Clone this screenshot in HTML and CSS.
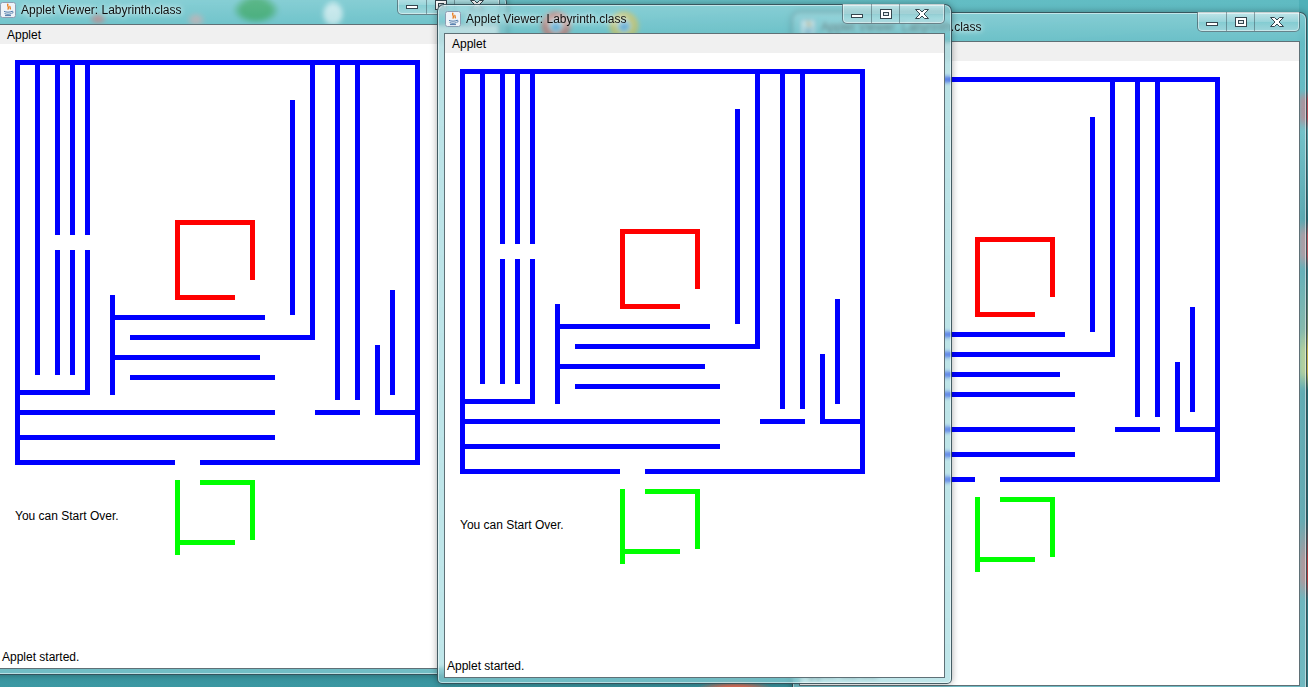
FILE: index.html
```html
<!DOCTYPE html>
<html>
<head>
<meta charset="utf-8">
<title>Applet Viewer: Labyrinth.class</title>
<link rel="stylesheet" href="styles.css">
</head>
<body>
<svg class="defs" aria-hidden="true">
  <defs>
    <g id="maze">
      <g class="walls">
        <rect x="15" y="60" width="405" height="5"/>
        <rect x="15" y="60" width="5" height="405"/>
        <rect x="415" y="60" width="5" height="405"/>
        <rect x="15" y="460" width="160" height="5"/>
        <rect x="200" y="460" width="220" height="5"/>
        <rect x="35" y="60" width="5" height="315"/>
        <rect x="55" y="60" width="5" height="175"/>
        <rect x="55" y="250" width="5" height="125"/>
        <rect x="70" y="60" width="5" height="175"/>
        <rect x="70" y="250" width="5" height="125"/>
        <rect x="85" y="60" width="5" height="175"/>
        <rect x="85" y="250" width="5" height="145"/>
        <rect x="15" y="390" width="75" height="5"/>
        <rect x="110" y="295" width="5" height="100"/>
        <rect x="110" y="315" width="155" height="5"/>
        <rect x="130" y="335" width="185" height="5"/>
        <rect x="310" y="60" width="5" height="280"/>
        <rect x="110" y="355" width="150" height="5"/>
        <rect x="130" y="375" width="145" height="5"/>
        <rect x="290" y="100" width="5" height="215"/>
        <rect x="335" y="60" width="5" height="340"/>
        <rect x="355" y="60" width="5" height="340"/>
        <rect x="390" y="290" width="5" height="105"/>
        <rect x="375" y="345" width="5" height="70"/>
        <rect x="375" y="410" width="45" height="5"/>
        <rect x="315" y="410" width="45" height="5"/>
        <rect x="15" y="410" width="260" height="5"/>
        <rect x="15" y="435" width="260" height="5"/>
      </g>
      <g class="red">
        <rect x="175" y="220" width="5" height="80"/>
        <rect x="175" y="220" width="80" height="5"/>
        <rect x="250" y="220" width="5" height="60"/>
        <rect x="175" y="295" width="60" height="5"/>
      </g>
      <g class="green">
        <rect x="175" y="480" width="5" height="75"/>
        <rect x="200" y="480" width="55" height="5"/>
        <rect x="250" y="480" width="5" height="60"/>
        <rect x="175" y="540" width="60" height="5"/>
      </g>
    </g>
    <g id="javaicon">
      <rect x="0.5" y="0.5" width="15" height="15" rx="2" fill="#eef3f8" stroke="#8c9db2"/>
      <path d="M8.2 1.8c-2.2 2 1.8 3 -0.4 5.8M10.2 4c-1.2 1.1 0.9 1.8 -0.2 3.4" fill="none" stroke="#e76f00" stroke-width="1.2"/>
      <path d="M4 9.4c2.2 1 5.8 1 8 0M4.6 11.6c2 .9 5 .9 6.8 0M12 9.4c1.6-.4 1.6 1.8-.3 1.7M5 13.6h6" fill="none" stroke="#4a78a8" stroke-width="1"/>
    </g>
    <g id="gmin">
      <rect x="2.5" y="6.5" width="11" height="3" fill="#fff" stroke="#35454e"/>
    </g>
    <g id="gmax">
      <rect x="2.5" y="1.5" width="11" height="9" fill="#fff" stroke="#35454e"/>
      <rect x="5.5" y="4.5" width="5" height="3" fill="#dfe7ea" stroke="#35454e"/>
    </g>
    <g id="gclose">
      <polygon points="1.5,1.5 5.5,1.5 8,4 10.5,1.5 14.5,1.5 10,6 14.5,10.5 10.5,10.5 8,8 5.5,10.5 1.5,10.5 6,6" fill="#fff" stroke="#35454e" stroke-linejoin="round"/>
    </g>
  </defs>
</svg>

<div class="desktop">

  <div class="win win-right">
    <div class="titlebar">
      <svg class="jicon" viewBox="0 0 16 16"><use href="#javaicon"/></svg>
      <span class="title">Applet Viewer: Labyrinth.class</span>
      <div class="caption">
        <span class="cbtn cmin"><svg viewBox="0 0 16 12"><use href="#gmin"/></svg></span>
        <span class="cbtn cmax"><svg viewBox="0 0 16 12"><use href="#gmax"/></svg></span>
        <span class="cbtn cclose"><svg viewBox="0 0 16 12"><use href="#gclose"/></svg></span>
      </div>
    </div>
    <div class="client">
      <div class="menubar"><span class="menu">Applet</span></div>
      <div class="applet">
        <svg class="canvas" viewBox="0 44 500 602"><use href="#maze"/><text class="msg" x="15" y="520">You can Start Over.</text></svg>
      </div>
      <div class="status">Applet started.</div>
    </div>
  </div>

  <div class="win win-left">
    <div class="titlebar">
      <svg class="jicon" viewBox="0 0 16 16"><use href="#javaicon"/></svg>
      <span class="title">Applet Viewer: Labyrinth.class</span>
      <div class="caption">
        <span class="cbtn cmin"><svg viewBox="0 0 16 12"><use href="#gmin"/></svg></span>
        <span class="cbtn cmax"><svg viewBox="0 0 16 12"><use href="#gmax"/></svg></span>
        <span class="cbtn cclose"><svg viewBox="0 0 16 12"><use href="#gclose"/></svg></span>
      </div>
    </div>
    <div class="client">
      <div class="menubar"><span class="menu">Applet</span></div>
      <div class="applet">
        <svg class="canvas" viewBox="0 44 500 602"><use href="#maze"/><text class="msg" x="15" y="520">You can Start Over.</text></svg>
      </div>
      <div class="status">Applet started.</div>
    </div>
  </div>

  <div class="win win-mid">
    <div class="titlebar">
      <svg class="jicon" viewBox="0 0 16 16"><use href="#javaicon"/></svg>
      <span class="title">Applet Viewer: Labyrinth.class</span>
      <div class="caption">
        <span class="cbtn cmin"><svg viewBox="0 0 16 12"><use href="#gmin"/></svg></span>
        <span class="cbtn cmax"><svg viewBox="0 0 16 12"><use href="#gmax"/></svg></span>
        <span class="cbtn cclose"><svg viewBox="0 0 16 12"><use href="#gclose"/></svg></span>
      </div>
    </div>
    <div class="client">
      <div class="menubar"><span class="menu">Applet</span></div>
      <div class="applet">
        <svg class="canvas" viewBox="0 44 500 602"><use href="#maze"/><text class="msg" x="15" y="520">You can Start Over.</text></svg>
      </div>
      <div class="status">Applet started.</div>
    </div>
  </div>

</div>
</body>
</html>
```

FILE: styles.css
```css
html, body {
  margin: 0;
  padding: 0;
}

body {
  width: 1308px;
  height: 687px;
  overflow: hidden;
  font-family: "Liberation Sans", Arial, sans-serif;
  font-size: 12px;
  color: #000;
}

.defs {
  position: absolute;
  width: 0;
  height: 0;
  overflow: hidden;
}

.desktop {
  position: relative;
  width: 1308px;
  height: 687px;
  overflow: hidden;
  background:
    radial-gradient(ellipse 24px 14px at 256px 10px, #12922c 60%, rgba(18,146,44,0) 100%),
    radial-gradient(ellipse 12px 14px at 333px 14px, #ffffff 60%, rgba(255,255,255,0) 100%),
    radial-gradient(ellipse 9px 6px at 98px 19px, #e06464 40%, rgba(224,100,100,0) 100%),
    radial-gradient(ellipse 10px 8px at 196px 20px, #e9a0a0 30%, rgba(233,160,160,0) 100%),
    radial-gradient(circle at 556px 26px, #4d8fd6 0 5px, #eaeaea 5px 7px, #d9483b 7px 13px, rgba(217,72,59,0) 16px),
    radial-gradient(circle at 624px 26px, #4d8fd6 0 5px, #eaeaea 5px 7px, #e5b82c 7px 13px, rgba(229,184,44,0) 16px),
    radial-gradient(ellipse 40px 10px at 735px 690px, #e0705a 40%, rgba(224,112,90,0) 100%),
    linear-gradient(180deg, #4fb0b8 0, #4fb0b8 90px, #d8606a 100px, #d8606a 118px, #6bbcc2 130px, #2f7e88 220px, #d86b72 235px, #d86b72 255px, #3f8f99 270px, #8aa07a 330px, #e6d05a 350px, #e6d05a 372px, #2f7e86 390px, #2c747e 520px, #d34a4a 560px, #d34a4a 580px, #3a8d96 600px, #3a8d96 687px) right top / 9px 687px no-repeat,
    linear-gradient(175deg, #6cc3c9 0%, #52b2ba 30%, #42a0aa 70%, #36919c 100%);
}

/* ---------- windows ---------- */
.win {
  position: absolute;
  width: 515px;
  height: 680px;
  box-sizing: border-box;
  padding: 0 6px 5px;
  display: flex;
  flex-direction: column;
  border: 1px solid rgba(38, 58, 66, 0.8);
  border-radius: 7px 7px 5px 5px;
  background: linear-gradient(180deg, rgba(170, 222, 228, 0.5) 0, rgba(120, 198, 206, 0.5) 30px, rgba(150, 214, 220, 0.6) 100%);
  backdrop-filter: blur(2px);
  box-shadow: inset 0 0 0 1px rgba(255, 255, 255, 0.5), 0 0 7px rgba(0, 0, 0, 0.35);
}

.win-left {
  left: -8px;
  top: -5px;
  z-index: 2;
}

.win-mid {
  left: 437px;
  top: 4px;
  z-index: 3;
}

.win-right {
  left: 792px;
  top: 12px;
  z-index: 1;
}

.titlebar {
  position: relative;
  height: 28px;
  flex: 0 0 28px;
  display: flex;
  align-items: center;
}

.jicon {
  width: 16px;
  height: 16px;
  margin-left: 1px;
  flex: 0 0 16px;
}

.title {
  margin-left: 5px;
  font-size: 12px;
  color: #111;
  white-space: nowrap;
  text-shadow: 0 0 5px rgba(255, 255, 255, 0.95), 0 0 9px rgba(255, 255, 255, 0.7);
}

.caption {
  position: absolute;
  right: 0;
  top: -1px;
  height: 19px;
  display: flex;
  border: 1px solid rgba(50, 70, 80, 0.6);
  border-top: none;
  border-radius: 0 0 5px 5px;
  overflow: hidden;
  background: linear-gradient(180deg, rgba(255, 255, 255, 0.5) 0%, rgba(255, 255, 255, 0.22) 50%, rgba(255, 255, 255, 0.06) 51%, rgba(255, 255, 255, 0.3) 100%);
  box-shadow: inset 0 0 0 1px rgba(255, 255, 255, 0.45);
}

.cbtn {
  display: flex;
  align-items: center;
  justify-content: center;
  height: 19px;
}

.cbtn svg {
  width: 16px;
  height: 12px;
}

.cmin {
  width: 28px;
}

.cmax {
  width: 27px;
  border-left: 1px solid rgba(50, 70, 80, 0.45);
}

.cclose {
  width: 44px;
  border-left: 1px solid rgba(50, 70, 80, 0.45);
}

/* ---------- client area ---------- */
.client {
  flex: 1 1 auto;
  display: flex;
  flex-direction: column;
  border: 1px solid #5f7076;
  background: #fff;
  min-height: 0;
}

.menubar {
  height: 19px;
  flex: 0 0 19px;
  background: #f0f0f0;
  line-height: 21px;
  padding-left: 7px;
  font-size: 12px;
  color: #000;
  overflow: hidden;
}

.applet {
  flex: 1 1 auto;
  overflow: hidden;
  background: #fff;
  min-height: 0;
}

.canvas {
  display: block;
  width: 500px;
  height: 602px;
}

.walls {
  fill: #0000ff;
}

.red {
  fill: #ff0000;
}

.green {
  fill: #00ff00;
}

.msg {
  font-family: "Liberation Sans", Arial, sans-serif;
  font-size: 12px;
  fill: #000;
}

.status {
  height: 22px;
  flex: 0 0 22px;
  line-height: 23px;
  padding-left: 2px;
  font-size: 12px;
  color: #000;
  background: #fff;
  white-space: nowrap;
  overflow: hidden;
}
```
